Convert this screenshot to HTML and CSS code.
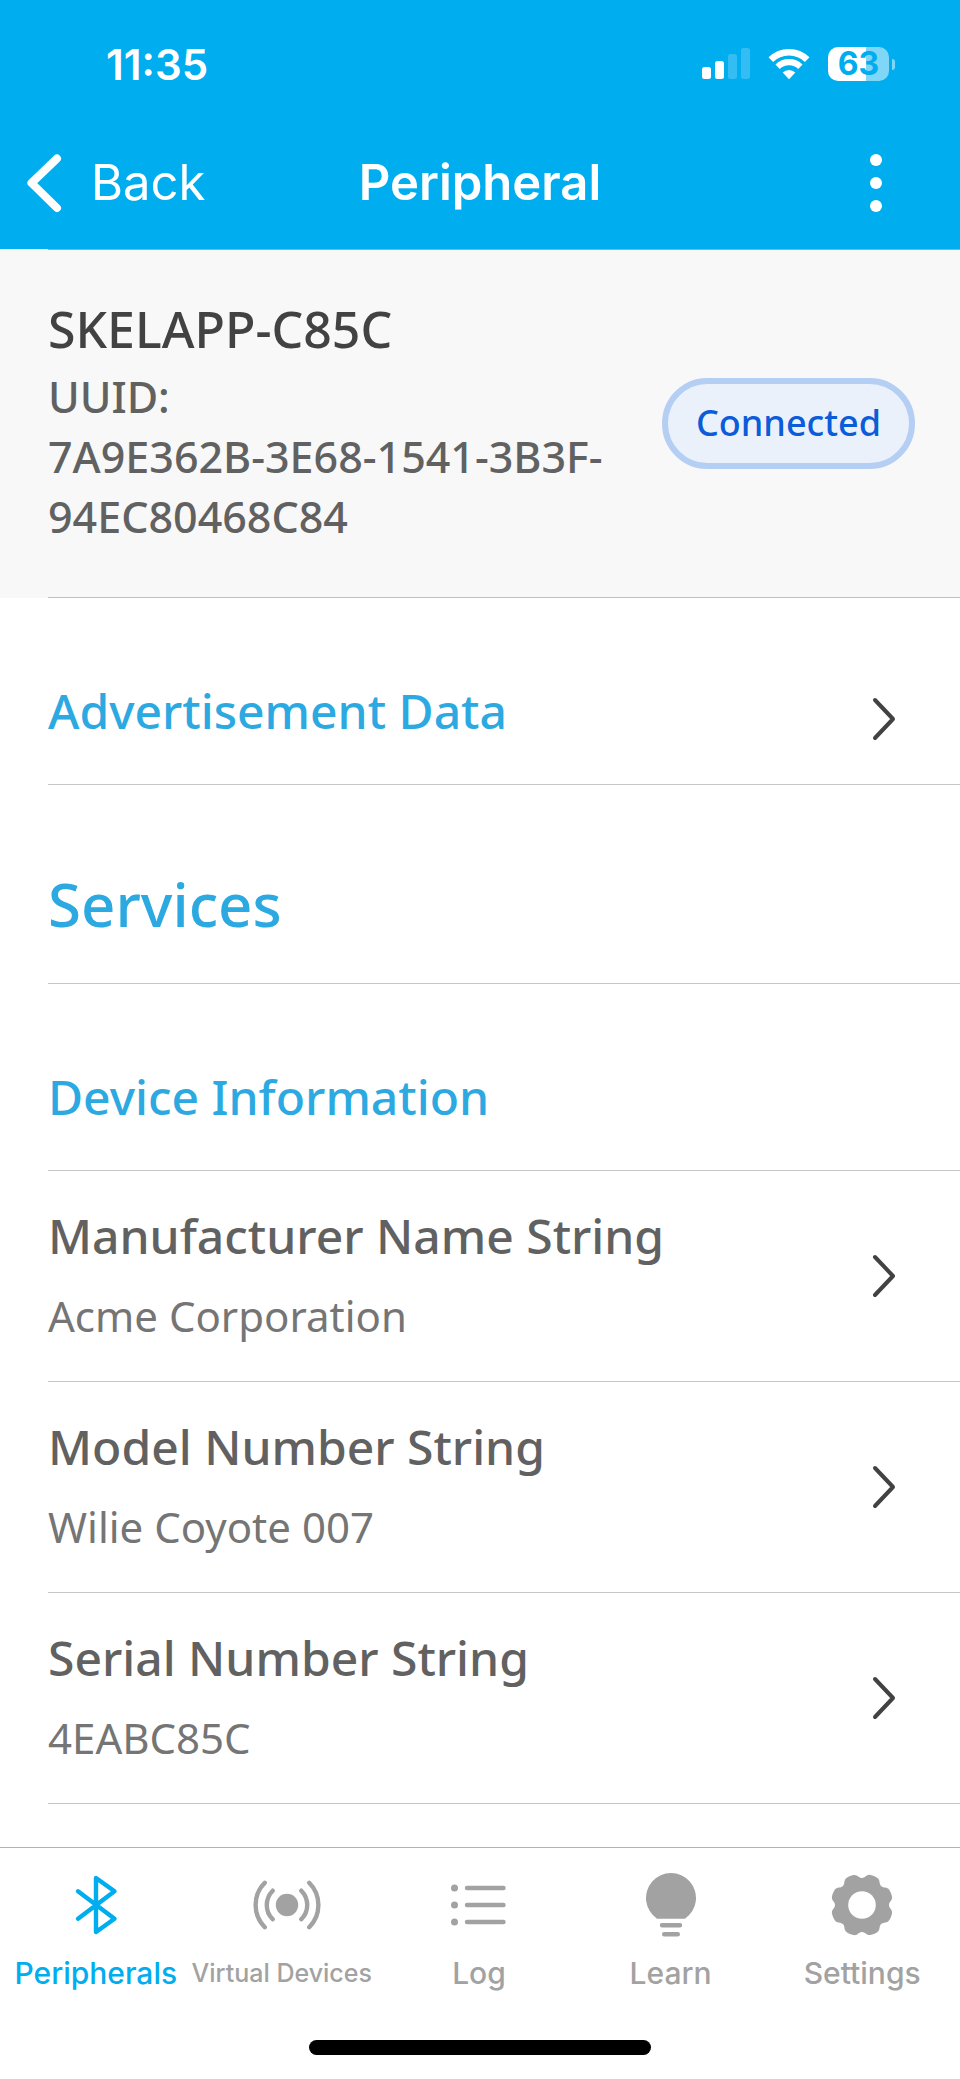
FILE: index.html
```html
<!DOCTYPE html>
<html lang="en">
<head>
  <meta charset="utf-8">
  <meta name="viewport" content="width=device-width, initial-scale=1">
  <title>Peripheral</title>
  <link rel="stylesheet" href="styles.css">
</head>
<body class="app">
  <header class="header">
    <div class="status">
      <span class="status-time">11:35</span>
      <div class="status-icons">
        <svg class="icon" width="48" height="34" viewBox="0 0 48 34" role="img" aria-label="Signal">
          <g fill="#fff">
            <rect x="0" y="20" width="9" height="12" rx="2.5"/>
            <rect x="13" y="14" width="9" height="18" rx="2.5"/>
            <rect x="26" y="7" width="9" height="25" rx="2.5" opacity=".2"/>
            <rect x="39" y="1" width="9" height="31" rx="2.5" opacity=".2"/>
          </g>
        </svg>
        <svg class="icon" width="42" height="34" viewBox="-21 -31 42 34" role="img" aria-label="Wi-Fi">
          <g fill="none" stroke="#fff">
            <path stroke-width="6.5" d="M-18.2-18.4a26 26 0 0 1 36.4 0"/>
            <path stroke-width="6.2" d="M-11.4-11.2a16.4 16.4 0 0 1 22.8 0"/>
          </g>
          <path fill="#fff" d="M0 1.2-6.3-5.4a9 9 0 0 1 12.6 0z"/>
        </svg>
        <div class="battery"><span class="battery-body">63</span><span class="battery-tip"></span></div>
      </div>
    </div>
    <nav class="nav">
      <button class="back" type="button">
        <svg class="icon" width="36" height="60" viewBox="0 0 36 60" aria-hidden="true"><path d="M31 5.500 5.500 30 31 55" fill="none" stroke="#fff" stroke-width="8" stroke-linecap="round" stroke-linejoin="round"/></svg>
        Back
      </button>
      <h1 class="nav-title">Peripheral</h1>
      <button class="more" type="button" aria-label="More options">
        <svg class="icon" width="12" height="60" viewBox="0 0 12 60" fill="#fff"><circle cx="6" cy="7" r="6"/><circle cx="6" cy="30" r="6"/><circle cx="6" cy="53" r="6"/></svg>
      </button>
    </nav>
  </header>

  <main class="content">
    <section class="device">
      <div class="device-row">
        <div class="device-text">
          <h2 class="device-name">SKELAPP-C85C</h2>
          <p class="device-id">UUID:<br>7A9E362B-3E68-1541-3B3F-94EC80468C84</p>
        </div>
        <button class="badge" type="button">Connected</button>
      </div>
    </section>

    <a class="row section" href="#advertisement">
      <span class="section-title">Advertisement Data</span>
      <svg class="icon" width="24" height="44" viewBox="0 0 24 44" aria-hidden="true"><path class="chevron" d="M3 3 21 22 3 41"/></svg>
    </a>
    <div class="row section"><h2 class="services-title">Services</h2></div>
    <div class="row section"><h3 class="section-title">Device Information</h3></div>

    <a class="row item" href="#manufacturer">
      <span class="item-text"><span class="item-title">Manufacturer Name String</span><span class="item-value">Acme Corporation</span></span>
      <svg class="icon" width="24" height="44" viewBox="0 0 24 44" aria-hidden="true"><path class="chevron" d="M3 3 21 22 3 41"/></svg>
    </a>
    <a class="row item" href="#model">
      <span class="item-text"><span class="item-title">Model Number String</span><span class="item-value">Wilie Coyote 007</span></span>
      <svg class="icon" width="24" height="44" viewBox="0 0 24 44" aria-hidden="true"><path class="chevron" d="M3 3 21 22 3 41"/></svg>
    </a>
    <a class="row item" href="#serial">
      <span class="item-text"><span class="item-title">Serial Number String</span><span class="item-value">4EABC85C</span></span>
      <svg class="icon" width="24" height="44" viewBox="0 0 24 44" aria-hidden="true"><path class="chevron" d="M3 3 21 22 3 41"/></svg>
    </a>
  </main>

  <footer class="footer">
    <nav class="tabs" aria-label="Main">
      <a class="tab tab-active" href="#peripherals" aria-current="page">
        <svg class="icon" width="68" height="68" viewBox="-34 -34 68 68" aria-hidden="true"><path class="line" d="M-18-13.700 18.500 13.700 0 27V-27L18.500-13.700-18 13.700"/></svg>
        <span>Peripherals</span>
      </a>
      <a class="tab" href="#virtual">
        <svg class="icon" width="68" height="68" viewBox="-34 -34 68 68" aria-hidden="true">
          <circle r="11.200" fill="currentColor"/>
          <path class="line" d="M14.300-14.300a20.200 20.200 0 0 1 0 28.600M-14.300-14.300a20.200 20.200 0 0 0 0 28.600M22.200-22.200a31.400 31.400 0 0 1 0 44.400M-22.200-22.200a31.400 31.400 0 0 0 0 44.400"/>
        </svg>
        <span class="tab-long">Virtual Devices</span>
      </a>
      <a class="tab" href="#log">
        <svg class="icon" width="68" height="68" viewBox="-34 -34 68 68" aria-hidden="true">
          <g fill="currentColor"><circle cx="-24.500" cy="-17" r="3.500"/><circle cx="-24.500" r="3.500"/><circle cx="-24.500" cy="17" r="3.500"/></g>
          <path class="line" d="M-12-17H24.500M-12 0H24.500M-12 17H24.500"/>
        </svg>
        <span>Log</span>
      </a>
      <a class="tab" href="#learn">
        <svg class="icon" width="68" height="68" viewBox="-34 -34 68 68" aria-hidden="true">
          <path fill="currentColor" d="M-14 13.700A25 25 0 1 1 14 13.700z"/>
          <path class="line" d="M-9 20.300H9M-6.800 29.300H6.800"/>
        </svg>
        <span>Learn</span>
      </a>
      <a class="tab" href="#settings">
        <svg class="icon" width="68" height="68" viewBox="-34 -34 68 68" aria-hidden="true">
          <defs><path id="lobe" d="M0 0V-27C3.500-27 4.500-30.900 8.500-30 11-29.500 13.300-28.500 15.200-27.200 18.600-25 16.600-21.600 19.100-19.100z"/></defs>
          <circle r="20" fill="none" stroke="currentColor" stroke-width="13"/>
          <g fill="currentColor">
            <use href="#lobe"/><use href="#lobe" transform="rotate(45)"/><use href="#lobe" transform="rotate(90)"/><use href="#lobe" transform="rotate(135)"/>
            <use href="#lobe" transform="rotate(180)"/><use href="#lobe" transform="rotate(225)"/><use href="#lobe" transform="rotate(270)"/><use href="#lobe" transform="rotate(315)"/>
          </g>
          <circle r="13.800" fill="#fff"/>
        </svg>
        <span>Settings</span>
      </a>
    </nav>
    <div class="home-bar"></div>
  </footer>
</body>
</html>
```
FILE: styles.css
```css
* {
  box-sizing: border-box;
}

.app {
  display: flex;
  flex-direction: column;
  min-height: 100vh;
  margin: 0;
  background: #fff;
  color: #616161;
  font-family: "Noto Sans", "Open Sans", sans-serif;
}

h1, h2, h3, p {
  margin: 0;
  font-weight: 500;
}

a {
  color: inherit;
  text-decoration: none;
}

button {
  padding: 0;
  border: 0;
  background: none;
  color: inherit;
  font: inherit;
}

.icon {
  display: block;
  flex: none;
}

/* Header */
.header {
  background: #00adef;
  color: #fff;
  font-family: Inter, sans-serif;
}

.status {
  display: flex;
  align-items: center;
  justify-content: space-between;
  height: 116px;
  padding: 12px 65px 0 106px;
}

.status-time {
  font-size: 42px;
  font-weight: 600;
}

.status-icons {
  display: flex;
  align-items: center;
  gap: 18px;
}

.battery {
  display: flex;
  align-items: center;
  gap: 3px;
}

.battery-body {
  width: 61px;
  border-radius: 10px;
  background: linear-gradient(90deg, #fff 62%, #80d6f7 62%);
  color: #00adef;
  font-size: 32px;
  font-weight: 700;
  line-height: 34px;
  text-align: center;
}

.battery-tip {
  width: 3px;
  height: 11px;
  border-radius: 0 3px 3px 0;
  background: #80d6f7;
}

.nav {
  display: grid;
  grid-template-columns: 1fr auto 1fr;
  align-items: center;
  height: 133px;
  padding: 0 26px;
}

.back {
  display: flex;
  align-items: center;
  justify-self: start;
  gap: 29px;
  font-size: 49px;
}

.nav-title {
  font-size: 49px;
  font-weight: 600;
}

.more {
  justify-self: end;
  margin-right: 52px;
}

/* Device summary */
.device {
  padding-left: 48px;
  background: #f8f8f8;
}

.device-row {
  display: flex;
  align-items: center;
  justify-content: space-between;
  gap: 24px;
  padding: 49px 45px 50px 0;
  border-top: 1px solid #a8a8a8;
  border-bottom: 1px solid #c0c0c0;
}

.device-text {
  display: grid;
  gap: 8px;
}

.device-name {
  color: #424242;
  font-size: 50px;
  line-height: 60px;
}

.device-id {
  max-width: 590px;
  font-size: 43px;
  line-height: 60px;
}

.badge {
  flex: none;
  padding: 15px 28px 16px;
  border: 6px solid #b5cef3;
  border-radius: 46px;
  background: #eaf1fb;
  color: #0b5cd9;
  font-size: 36px;
  font-weight: 500;
  line-height: 48px;
}

/* List */
.row {
  display: flex;
  align-items: center;
  justify-content: space-between;
  margin-left: 48px;
  padding-right: 64px;
  border-bottom: 1px solid #c6c6c6;
}

.section {
  align-items: flex-end;
  padding-top: 83px;
  padding-bottom: 43px;
  color: #2ca9e1;
}

.section-title {
  font-size: 48px;
  font-weight: 500;
  line-height: 60px;
}

.services-title {
  font-size: 60px;
  line-height: 72px;
}

.item {
  padding-top: 35px;
  padding-bottom: 35px;
}

.item-text {
  display: grid;
  gap: 20px;
}

.item-title {
  font-size: 48px;
  font-weight: 500;
  line-height: 60px;
}

.item-value {
  color: #757575;
  font-size: 42px;
  font-weight: 400;
  line-height: 60px;
}

.chevron {
  fill: none;
  stroke: #424242;
  stroke-width: 4;
  stroke-linecap: round;
  stroke-linejoin: round;
}

/* Tab bar */
.footer {
  margin-top: auto;
  padding: 23px 0 24px;
  border-top: 1px solid #b2b2b2;
  font-family: Inter, sans-serif;
}

.tabs {
  display: grid;
  grid-template-columns: repeat(5, minmax(0, 1fr));
  padding-right: 2px;
}

.tab {
  display: flex;
  flex-direction: column;
  align-items: center;
  gap: 16px;
  color: #a2a2a2;
  font-size: 30px;
  font-weight: 500;
  line-height: 36px;
  white-space: nowrap;
}

.tab-active {
  color: #00adef;
}

.tab-long {
  align-self: flex-start;
  font-size: 25px;
}

.line {
  fill: none;
  stroke: currentColor;
  stroke-width: 4.4;
  stroke-linecap: round;
  stroke-linejoin: round;
}

.home-bar {
  width: 342px;
  height: 15px;
  margin: 49px auto 0;
  border-radius: 8px;
  background: #000;
}
```
